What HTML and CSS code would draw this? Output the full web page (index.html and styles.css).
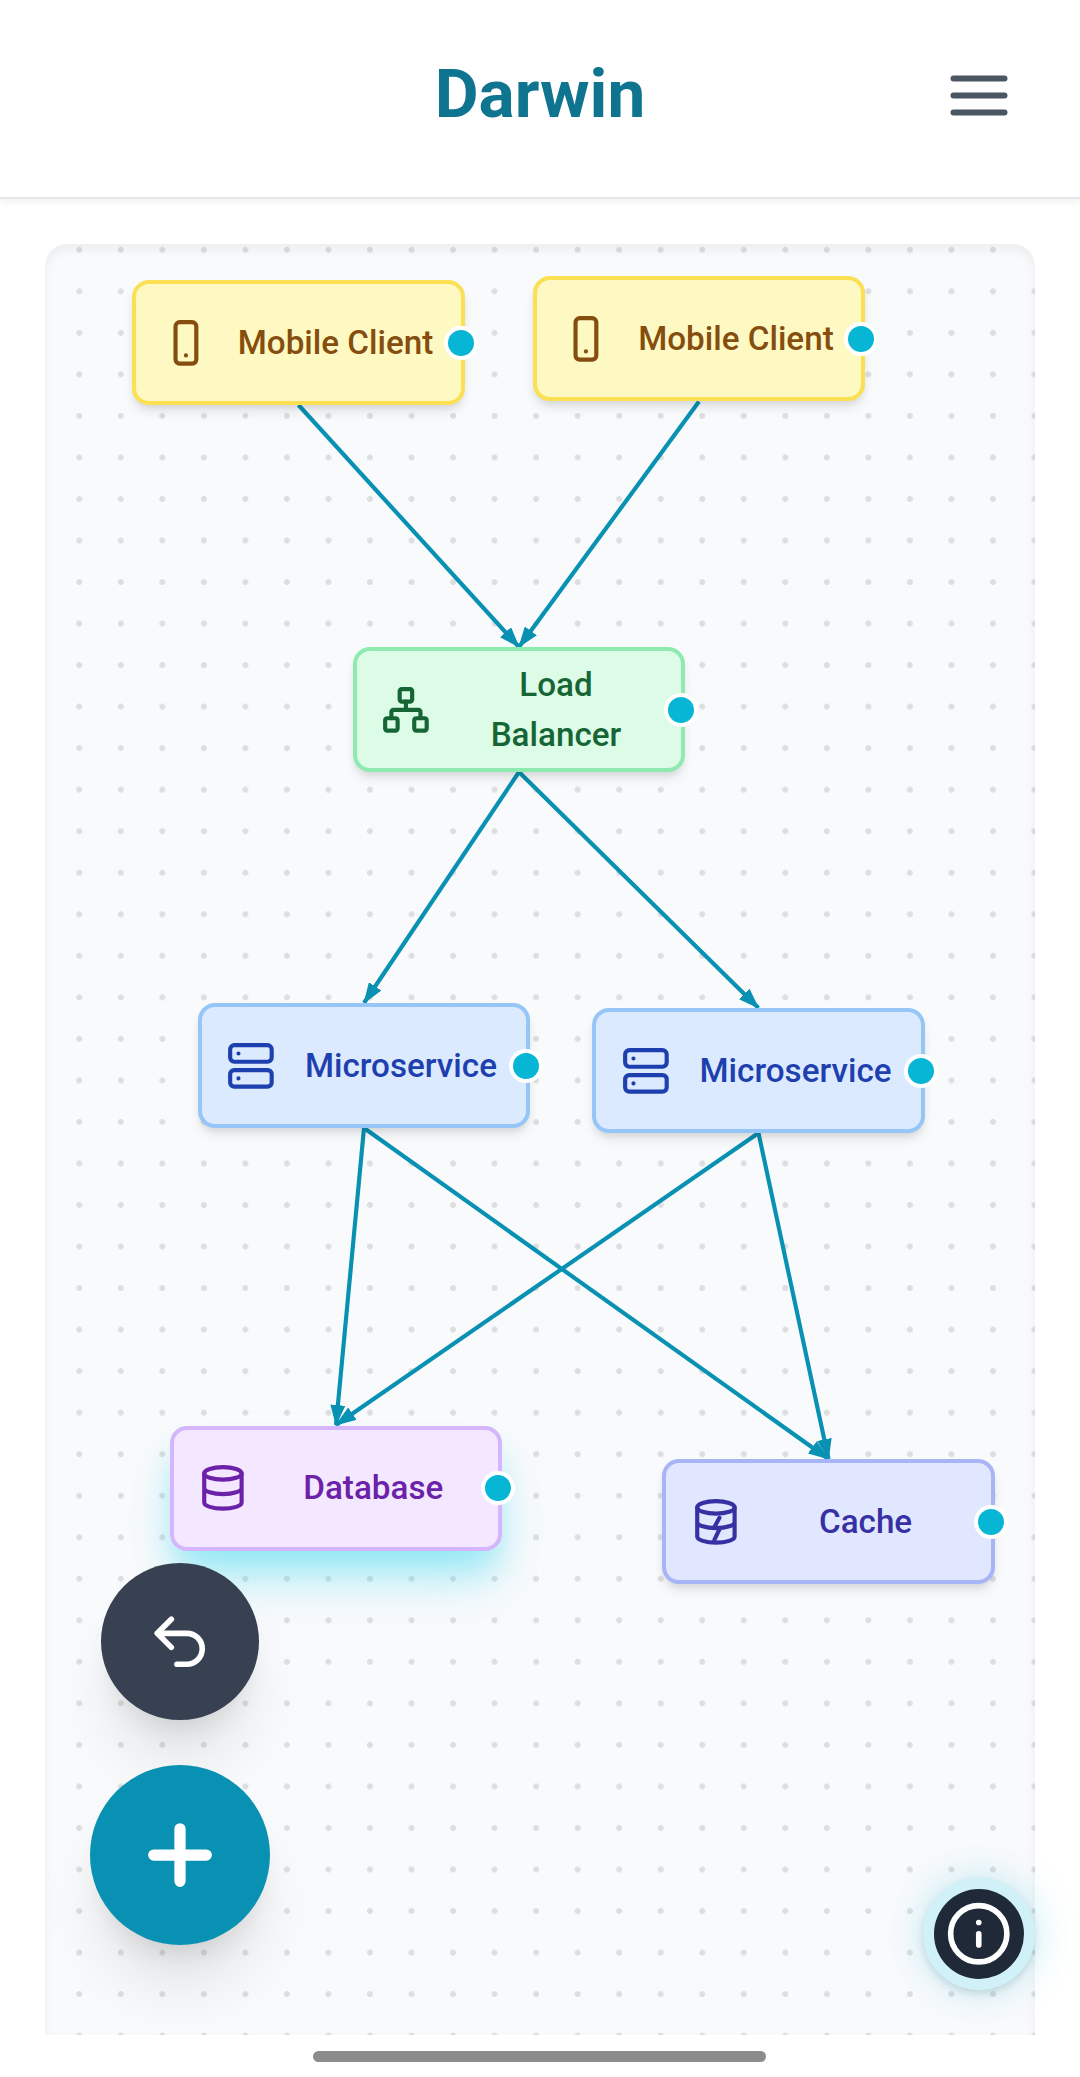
FILE: index.html
```html
<!DOCTYPE html>
<html lang="en">
<head>
<meta charset="utf-8">
<title>Darwin</title>
<link rel="stylesheet" href="styles.css">
</head>
<body>
<header class="topbar">
  <h1 class="brand">Darwin</h1>
  <button class="menu" aria-label="Menu"><svg viewBox="0 0 58 42"><path d="M3.5 4.5h51M3.5 21.5h51M3.5 38.5h51"/></svg></button>
</header>
<main class="stage">
  <section class="canvas">
    <svg class="edges" viewBox="45 244 990 1791">
      <defs>
        <marker id="arrow" viewBox="0 0 21 15" refX="20" refY="7.5" markerWidth="21" markerHeight="15" markerUnits="userSpaceOnUse" orient="auto"><path d="M0 0L21 7.5L0 15z"/></marker>
      </defs>
      <path d="M298.5 405L519 647"/>
      <path d="M699 401.500L519 647"/>
      <path d="M519 772L364 1003"/>
      <path d="M519 772L758.500 1008"/>
      <path d="M364 1128L336 1425"/>
      <path d="M364 1128L828.500 1459"/>
      <path d="M758.500 1133L336 1425"/>
      <path d="M758.500 1133L828.500 1459"/>
    </svg>
    <div class="node client n1"><svg viewBox="0 0 24 24"><rect x="7" y="2" width="10" height="20" rx="2"/><path d="M12 18h.01"/></svg><span>Mobile Client</span><i></i></div>
    <div class="node client n2"><svg viewBox="0 0 24 24"><rect x="7" y="2" width="10" height="20" rx="2"/><path d="M12 18h.01"/></svg><span>Mobile Client</span><i></i></div>
    <div class="node balancer n3"><svg viewBox="0 0 24 24"><rect x="16" y="16" width="6" height="6" rx="1"/><rect x="2" y="16" width="6" height="6" rx="1"/><rect x="9" y="2" width="6" height="6" rx="1"/><path d="M5 16v-3a1 1 0 0 1 1-1h12a1 1 0 0 1 1 1v3M12 12V8"/></svg><span>Load Balancer</span><i></i></div>
    <div class="node service n4"><svg viewBox="0 0 24 24"><rect x="2" y="2" width="20" height="8" rx="2"/><rect x="2" y="14" width="20" height="8" rx="2"/><path d="M6 6h.01M6 18h.01"/></svg><span>Microservice</span><i></i></div>
    <div class="node service n5"><svg viewBox="0 0 24 24"><rect x="2" y="2" width="20" height="8" rx="2"/><rect x="2" y="14" width="20" height="8" rx="2"/><path d="M6 6h.01M6 18h.01"/></svg><span>Microservice</span><i></i></div>
    <div class="node database n6"><svg viewBox="0 0 24 24"><ellipse cx="12" cy="5" rx="9" ry="3"/><path d="M3 5v14a9 3 0 0 0 18 0V5M3 12a9 3 0 0 0 18 0"/></svg><span>Database</span><i></i></div>
    <div class="node cache n7"><svg viewBox="0 0 24 24"><ellipse cx="12" cy="5" rx="9" ry="3"/><path d="M3 5v14a9 3 0 0 0 18 0V5M3 12a9 3 0 0 0 18 0M13.700 10l-2.700 5h3l-2.700 5.500"/></svg><span>Cache</span><i></i></div>
  </section>
</main>
<button class="fab undo" aria-label="Undo"><svg viewBox="0 0 24 24"><path d="M9 14L4 9l5-5M4 9h10.500a5.500 5.500 0 0 1 0 11H11"/></svg></button>
<button class="fab add" aria-label="Add"><svg viewBox="0 0 24 24"><path d="M5 12h14M12 5v14"/></svg></button>
<button class="fab info" aria-label="Info"><svg viewBox="0 0 24 24"><circle cx="12" cy="12" r="10"/><path d="M12 16v-4M12 8h.01"/></svg></button>
<footer class="homebar"><div class="pill"></div></footer>
</body>
</html>
```
FILE: styles.css
```css
* { box-sizing: border-box; }
body {
  margin: 0;
  position: relative;
  height: 2077px;
  display: flex;
  flex-direction: column;
  background: #fff;
  font-family: Roboto, "Liberation Sans", sans-serif;
  overflow: hidden;
}
button { border: 0; padding: 0; background: none; }
svg { display: block; fill: none; stroke: currentColor; stroke-width: 2; stroke-linecap: round; stroke-linejoin: round; }
.topbar {
  height: 199px;
  flex: none;
  display: grid;
  grid-template-columns: 1fr auto 1fr;
  align-items: center;
  padding: 0 72.500px 8px;
  border-bottom: 2px solid #e5e7eb;
  box-shadow: 0 3px 7px rgba(0, 0, 0, .06);
}
.brand { grid-column: 2; margin: 0; padding-bottom: 2px; color: #0e7490; font-size: 67.5px; line-height: 90px; font-weight: 700; }
.menu { justify-self: end; color: #4b5563; }
.menu svg { width: 58px; height: 42px; stroke-width: 6; }
.stage { flex: 1; padding: 45px 45px 0; }
.canvas {
  position: relative;
  height: 100%;
  border-radius: 22px 22px 0 0;
  background: radial-gradient(circle, #dcdee0 2.600px, transparent 3.300px) 13.500px -15px / 41.540px 41.540px #f9fafc;
  box-shadow: inset 0 6px 11px rgba(0, 0, 0, .05);
}
.edges { position: absolute; inset: 0; width: 100%; height: 100%; color: #0891b2; stroke-width: 4.150; stroke-linecap: butt; }
.edges path { marker-end: url(#arrow); }
.edges marker path { fill: #0891b2; stroke: none; marker-end: none; }
.node {
  position: absolute;
  width: 332.300px;
  height: 125px;
  display: flex;
  align-items: center;
  gap: 25px;
  padding: 0 25px 0 24.400px;
  border: 4px solid;
  border-radius: 17px;
  font-size: 33.230px;
  line-height: 49.800px;
  font-weight: 500;
  text-align: center;
  box-shadow: 0 8px 12px -2px rgba(0, 0, 0, .1), 0 4px 8px -4px rgba(0, 0, 0, .1);
}
.node svg { width: 49.850px; height: 49.850px; flex: none; }
.node span { flex: 1; }
.node i { position: absolute; right: -17px; top: 41.500px; width: 34px; height: 34px; border: 4px solid #fff; border-radius: 50%; background: #06b6d4; }
.client { background: #fef9c3; border-color: #fae052; color: #854d0e; }
.balancer { background: #dcfce7; border-color: #8eebb0; color: #166534; }
.service { background: #dbeafe; border-color: #96c5f8; color: #1e40af; }
.database { background: #f3e8ff; border-color: #d5b5fb; color: #6b21a8; box-shadow: 0 21px 31px -6px rgba(34, 211, 238, .3), 0 34px 52px -6px rgba(34, 211, 238, .28); }
.cache { background: #e0e7ff; border-color: #a7b4f8; color: #3730a3; }
.n1 { left: 87.300px; top: 36.300px; }
.n2 { left: 487.700px; top: 32.300px; }
.n3 { left: 307.700px; top: 403.300px; }
.n4 { left: 152.700px; top: 759.300px; }
.n5 { left: 547.300px; top: 764.300px; }
.n6 { left: 125px; top: 1181.500px; }
.n7 { left: 617.300px; top: 1215px; }
.fab { position: absolute; display: flex; align-items: center; justify-content: center; border-radius: 50%; color: #fff; }
.undo, .add { box-shadow: 0 50px 68px -14px rgba(0, 0, 0, .11), 0 20px 28px -14px rgba(0, 0, 0, .11); }
.undo { left: 101px; top: 1562.500px; width: 158px; height: 157.500px; background: #374151; }
.undo svg { width: 67.500px; height: 67.500px; }
.add { left: 90px; top: 1765px; width: 180px; height: 180px; background: #0891b2; }
.add svg { width: 90px; height: 90px; stroke-width: 3; }
.info { left: 934px; top: 1889px; width: 90px; height: 90px; background: #1f2937; box-shadow: 0 0 0 11px #cff1f7, 0 4px 10px 10px rgba(0, 50, 70, .16), 0 0 42px 14px rgba(6, 182, 212, .2); }
.info svg { width: 67.500px; height: 67.500px; }
.homebar { height: 42px; flex: none; display: flex; justify-content: center; padding: 16px 1px 0 0; }
.pill { width: 453px; height: 11px; border-radius: 6px; background: #8c8c8c; }
```
